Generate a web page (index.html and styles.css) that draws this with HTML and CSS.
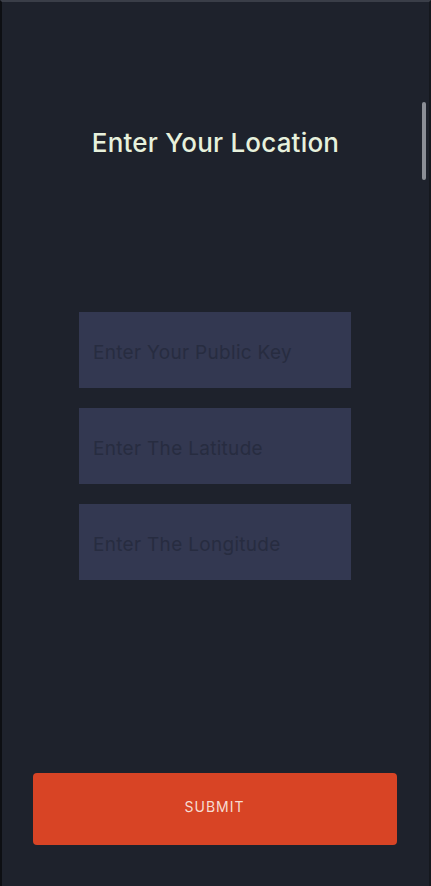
FILE: index.html
```html
<!DOCTYPE html>
<html>
<head>
<meta charset="utf-8">
<link rel="stylesheet" href="styles.css">
</head>
<body>
<div class="screen">
  <div class="scrollbar"></div>
  <h1 class="title">Enter Your Location</h1>
  <form class="form">
    <div class="field">Enter Your Public Key</div>
    <div class="field">Enter The Latitude</div>
    <div class="field">Enter The Longitude</div>
  </form>
  <div class="actions">
    <button class="submit" type="button">SUBMIT</button>
  </div>
</div>
</body>
</html>
```
FILE: styles.css
```css
html, body {
  margin: 0;
  padding: 0;
  background: #1e222c;
}
.screen {
  position: relative;
  width: 431px;
  height: 886px;
  box-sizing: border-box;
  border-top: 2px solid #3a3e48;
  border-left: 2px solid #0d0f13;
  border-right: 2px solid #15181e;
  background: #1e222c;
  display: flex;
  flex-direction: column;
  align-items: center;
  font-family: "Inter", "Noto Sans", sans-serif;
}
.scrollbar {
  position: absolute;
  right: 3px;
  top: 100px;
  width: 4px;
  height: 78px;
  border-radius: 2px;
  background: #8b8e96;
}
.title {
  margin: 123px 0 0 0;
  font-size: 26px;
  font-weight: 500;
  color: #e7f1dc;
  line-height: 36px;
  letter-spacing: 0.2px;
}
.form {
  margin: 151px 1px 0 0;
  display: flex;
  flex-direction: column;
  gap: 20px;
}
.field {
  width: 272px;
  height: 76px;
  box-sizing: border-box;
  padding: 4px 0 0 14px;
  display: flex;
  align-items: center;
  background: #333851;
  color: #272c40;
  font-size: 19px;
  letter-spacing: 0.3px;
}
.actions {
  margin-top: auto;
  margin-bottom: 41px;
  width: 100%;
  display: flex;
  justify-content: center;
}
.submit {
  width: 364px;
  height: 72px;
  margin-left: -2px;
  padding: 0 0 5px 0;
  border: none;
  border-radius: 4px;
  background: #d84425;
  color: #f6dcd2;
  font-family: "Inter", "Noto Sans", sans-serif;
  font-size: 14px;
  letter-spacing: 1px;
}
```
